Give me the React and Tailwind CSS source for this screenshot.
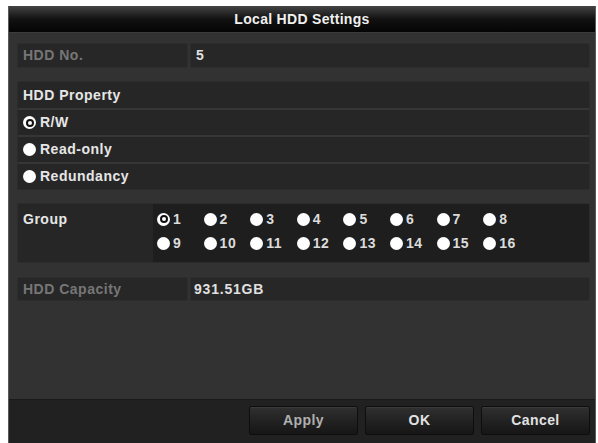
import React from "react";

const font = { fontFamily: '"Liberation Sans", Arial, sans-serif' };

function Radio({ selected = false }) {
  return (
    <span className="w-[13px] h-[13px] rounded-full bg-white flex items-center justify-center shrink-0">
      {selected && (
        <span className="w-[8px] h-[8px] rounded-full border-[2px] border-[#111] bg-white" />
      )}
    </span>
  );
}

function Btn({ children, dim }) {
  return (
    <div
      className={
        "w-[109px] h-[29px] flex items-center justify-center rounded-[2px] border border-[#0e0e0e] bg-gradient-to-b from-[#303030] via-[#222] to-[#161616] shadow-[inset_0_1px_0_#3a3a3a] text-[14px] font-bold tracking-[0.4px] " +
        (dim ? "text-[#b0b0b0]" : "text-[#e2e2e2]")
      }
    >
      {children}
    </div>
  );
}

export default function App() {
  const groups = Array.from({ length: 16 }, (_, i) => i + 1);
  return (
    <div className="w-[598px] h-[443px] bg-white pt-[6px] pl-[8px] pr-[2px] overflow-hidden" style={font}>
      <div className="h-[437px] flex flex-col bg-[#323232] border-l border-r border-[#5a5a5a]">
        <div className="h-[27px] shrink-0 flex items-center justify-center bg-gradient-to-b from-[#454545] via-[#121212] to-[#050505] border-b border-[#3c3c3c] text-[#f0f0f0] text-[14px] font-bold tracking-[0.3px]">
          Local HDD Settings
        </div>
        <div className="flex-1 flex flex-col pl-[8px] pr-[5px] pt-[10px] tracking-[0.5px]">
          <div className="h-[25px] flex gap-[2px]">
            <div className="w-[171px] bg-[#272727] border border-[#2d2d2d] rounded-[2px] flex items-center pl-[5px] text-[14px] font-bold text-[#767676]">
              HDD No.
            </div>
            <div className="flex-1 bg-[#272727] border border-[#2d2d2d] rounded-[2px] flex items-center pl-[5px] text-[14px] font-bold text-[#e0e0e0]">
              5
            </div>
          </div>

          <div className="mt-[13px] flex flex-col bg-[#262626] rounded-[2px] border border-[#2c2c2c]">
            <div className="h-[26px] flex items-center pl-[5px] text-[14px] font-bold text-[#e6e6e6]">
              HDD Property
            </div>
            <div className="h-[27px] flex items-center gap-[4px] pl-[5px] border-t-[2px] border-[#363636] text-[14px] font-bold text-[#e6e6e6]">
              <Radio selected />
              R/W
            </div>
            <div className="h-[27px] flex items-center gap-[4px] pl-[5px] border-t-[2px] border-[#363636] text-[14px] font-bold text-[#e6e6e6]">
              <Radio />
              Read-only
            </div>
            <div className="h-[27px] flex items-center gap-[4px] pl-[5px] border-t-[2px] border-[#363636] text-[14px] font-bold text-[#e6e6e6]">
              <Radio />
              Redundancy
            </div>
          </div>

          <div className="mt-[13px] h-[60px] flex bg-[#262626] rounded-[2px] border border-[#2c2c2c]">
            <div className="w-[135px] pt-[3px] pl-[5px]">
              <div className="h-[24px] flex items-center text-[14px] font-bold text-[#e6e6e6]">Group</div>
            </div>
            <div className="flex-1 bg-[#1e1e1e] pt-[3px] pl-[4px]">
              <div className="grid grid-cols-[repeat(8,46.6px)] grid-rows-[24px_24px]">
                {groups.map((g) => (
                  <div key={g} className="flex items-center gap-[3px] text-[14px] font-bold text-[#dcdcdc]">
                    <Radio selected={g === 1} />
                    {g}
                  </div>
                ))}
              </div>
            </div>
          </div>

          <div className="mt-[14px] h-[24px] flex gap-[2px]">
            <div className="w-[171px] bg-[#272727] border border-[#2d2d2d] rounded-[2px] flex items-center pl-[5px] text-[14px] font-bold text-[#767676]">
              HDD Capacity
            </div>
            <div className="flex-1 bg-[#272727] border border-[#2d2d2d] rounded-[2px] flex items-center pl-[3px] text-[14px] font-bold text-[#e0e0e0] tracking-[0.8px]">
              931.51GB
            </div>
          </div>
        </div>
        <div className="h-[44px] shrink-0 bg-[#212121] border-t border-[#1a1a1a] flex items-center justify-end gap-[7px] pr-[5px] pb-[2px]">
          <Btn dim>Apply</Btn>
          <Btn>OK</Btn>
          <Btn>Cancel</Btn>
        </div>
      </div>
    </div>
  );
}
